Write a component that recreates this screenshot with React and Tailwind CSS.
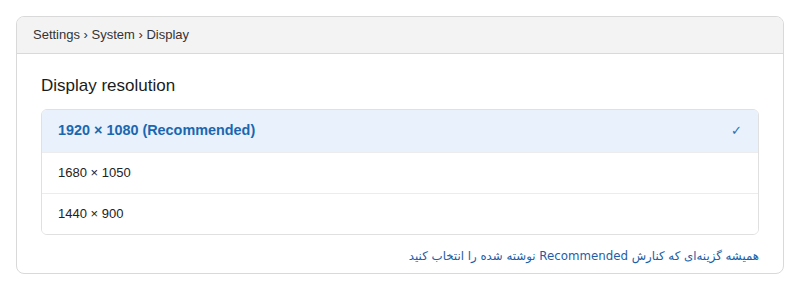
import { useState } from "react";

const options = [
  { id: "1920", label: "1920 × 1080 (Recommended)", recommended: true },
  { id: "1680", label: "1680 × 1050" },
  { id: "1440", label: "1440 × 900" },
];

export default function App() {
  const [selected, setSelected] = useState("1920");

  return (
    <div className="w-[800px] h-[290px] bg-white pt-4 px-4 font-['Liberation_Sans',sans-serif]">
      <div className="w-[768px] h-[258px] rounded-lg border border-[#d9d9d9] overflow-hidden">
        <div className="h-[37px] bg-[#f3f3f3] border-b border-[#d9d9d9] flex items-center px-4 text-[13px] text-[#333]">
          Settings › System › Display
        </div>
        <div className="px-6 pt-[20px]">
          <h2 className="text-[17px] text-[#1b1b1b] leading-6">Display resolution</h2>
          <div className="mt-[11px] rounded-md border border-[#e0e0e0] overflow-hidden">
            {options.map((o, i) => {
              const active = selected === o.id;
              return (
                <div
                  key={o.id}
                  onClick={() => setSelected(o.id)}
                  className={`${i === 0 ? "h-[42px]" : "h-[41px] border-t border-[#ececec]"} flex items-center justify-between pl-4 pr-4 cursor-pointer ${active ? "bg-[#e8f1fc]" : "bg-white"}`}
                >
                  <span className={active ? "font-bold text-[#1a67b0] text-[14.4px]" : "text-[13px] text-[#222]"}>
                    {o.label}
                  </span>
                  {active && <span className="text-[#2a6fb5] text-[13px] font-['DejaVu_Sans',sans-serif] font-light">✓</span>}
                </div>
              );
            })}
          </div>
          <p dir="rtl" className="mt-[13px] text-[11.8px] text-[#1d5ea6] font-['DejaVu_Sans',sans-serif]">
            همیشه گزینه‌ای که کنارش Recommended نوشته شده را انتخاب کنید
          </p>
        </div>
      </div>
    </div>
  );
}
